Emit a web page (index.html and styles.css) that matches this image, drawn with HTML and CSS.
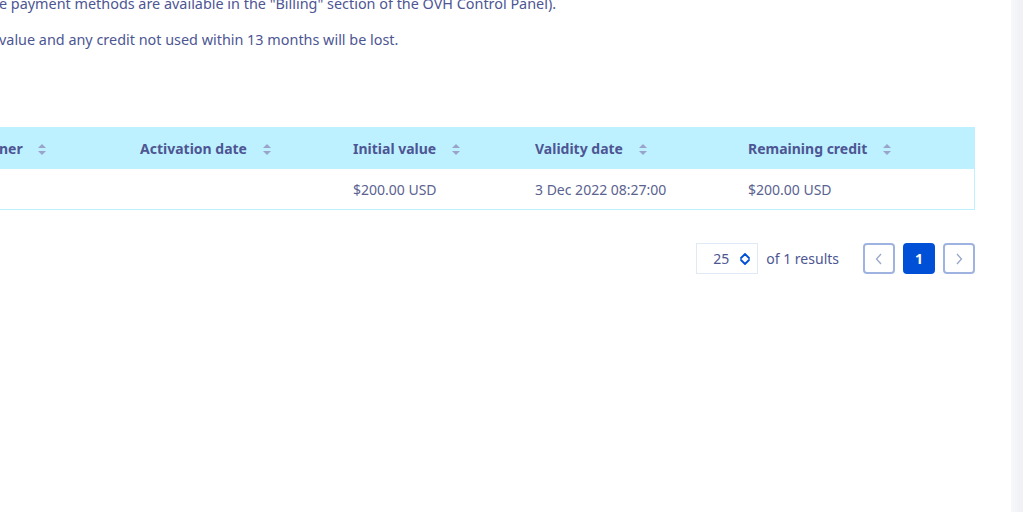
FILE: index.html
```html
<!DOCTYPE html>
<html lang="en">
<head>
<meta charset="UTF-8">
<meta name="viewport" content="width=device-width, initial-scale=1.0">
<title>Vouchers</title>
<link rel="stylesheet" href="styles.css">
</head>
<body>
    <div class="page">
        <div class="intro">
            <p class="text first">e payment methods are available in the "Billing" section of the OVH Control Panel).</p>
            <p class="text">value and any credit not used within 13 months will be lost.</p>
        </div>

        <div class="table">
            <div class="row head">
                <div class="cell c1">ner <span class="sort"></span></div>
                <div class="cell c2">Activation date <span class="sort"></span></div>
                <div class="cell c3">Initial value <span class="sort"></span></div>
                <div class="cell c4">Validity date <span class="sort"></span></div>
                <div class="cell c5">Remaining credit <span class="sort"></span></div>
            </div>
            <div class="row body">
                <div class="cell c1"></div>
                <div class="cell c2"></div>
                <div class="cell c3">$200.00 USD</div>
                <div class="cell c4">3 Dec 2022 08:27:00</div>
                <div class="cell c5">$200.00 USD</div>
            </div>
        </div>

        <div class="pager">
            <div class="perpage">
                <span>25</span>
                <svg width="12" height="14" viewBox="0 0 12 14"><path d="M2 6 L6 2 L10 6 M2 8 L6 12 L10 8" fill="none" stroke="#0050d7" stroke-width="1.8" stroke-linecap="round" stroke-linejoin="round"/></svg>
            </div>
            <span class="results">of 1 results</span>
            <div class="pages">
                <button class="pbtn"><svg width="8" height="12" viewBox="0 0 8 12"><path d="M6 1 L1.5 6 L6 11" fill="none" stroke="#99a6cc" stroke-width="1.3"/></svg></button>
                <button class="pbtn current">1</button>
                <button class="pbtn"><svg width="8" height="12" viewBox="0 0 8 12"><path d="M2 1 L6.5 6 L2 11" fill="none" stroke="#99a6cc" stroke-width="1.3"/></svg></button>
            </div>
        </div>
    </div>
    <div class="scrollbar"></div>
</body>
</html>
```

FILE: styles.css
```css
html, body {
    margin: 0;
    padding: 0;
    background: #fff;
    overflow: hidden;
}
body {
    font-family: "Source Sans Pro", "Noto Sans", Arial, sans-serif;
    color: #4d5693;
}
.page {
    width: 976px;
    margin-left: -1px;
}
.intro {
    margin-top: -6px;
    height: 133px;
}
.text {
    font-size: 14.4px;
    line-height: 20px;
    margin: 0 0 16px 0;
    white-space: nowrap;
}
.table {
    border-right: 1px solid #bef1ff;
    border-bottom: 1px solid #bef1ff;
}
.row {
    display: grid;
    grid-template-columns: 125px 213px 182px 213px 1fr;
    align-items: center;
}
.head {
    background: #bef1ff;
    height: 42px;
    font-weight: 700;
    font-size: 14px;
    color: #4d5693;
}
.body {
    height: 40px;
    font-size: 14px;
    color: #5a6290;
}
.cell {
    padding-left: 16px;
    white-space: nowrap;
}
.c1 {
    padding-left: 0;
}
.sort {
    display: inline-block;
    width: 8px;
    height: 11px;
    margin-left: 12px;
    vertical-align: -1px;
    position: relative;
}
.sort::before, .sort::after {
    content: "";
    position: absolute;
    left: 0;
    border-left: 4px solid transparent;
    border-right: 4px solid transparent;
}
.sort::before {
    top: 0;
    border-bottom: 4px solid #9aa3c9;
}
.sort::after {
    bottom: 0;
    border-top: 4px solid #9aa3c9;
}
.pager {
    display: flex;
    justify-content: flex-end;
    align-items: center;
    margin-top: 33px;
}
.perpage {
    width: 62px;
    height: 31px;
    box-sizing: border-box;
    border: 1px solid #dfeaf6;
    display: flex;
    align-items: center;
    justify-content: space-between;
    padding: 0 6px 0 16px;
    font-size: 14px;
}
.results {
    font-size: 14px;
    margin-left: 8px;
    margin-right: 24px;
}
.pages {
    display: flex;
    gap: 8px;
}
.pbtn {
    width: 32px;
    height: 31px;
    box-sizing: border-box;
    border: 2px solid #9fb3e0;
    border-radius: 4px;
    background: #fff;
    padding: 0;
    display: flex;
    align-items: center;
    justify-content: center;
    font-family: inherit;
}
.current {
    background: #0050d7;
    border-color: #0050d7;
    color: #fff;
    font-weight: 700;
    font-size: 14px;
}
.scrollbar {
    position: fixed;
    top: 0;
    right: 0;
    width: 12px;
    height: 100%;
    background: linear-gradient(to right, #f7f8fa, #eef0f4);
}
```
